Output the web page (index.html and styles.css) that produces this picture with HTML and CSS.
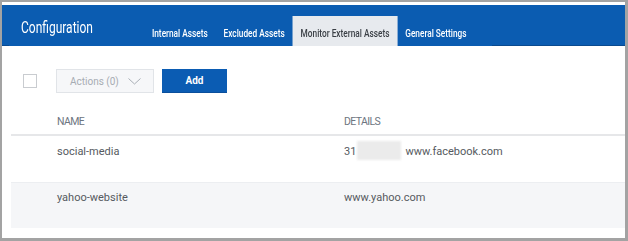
FILE: index.html
```html
<!DOCTYPE html>
<html>
<head>
<meta charset="utf-8">
<link rel="stylesheet" href="styles.css">
</head>
<body>
<div class="frame">
  <div class="topbar">
    <div class="topbar-inner">
      <div class="title"><span class="title-text">Configuration</span></div>
      <nav class="tabs">
        <a class="tab">Internal Assets</a>
        <a class="tab">Excluded Assets</a>
        <a class="tab active">Monitor External Assets</a>
        <a class="tab">General Settings</a>
      </nav>
    </div>
  </div>
  <div class="toolbar">
    <span class="checkbox"></span>
    <button class="btn-actions">Actions (0)
      <svg class="chev" width="13" height="7" viewBox="0 0 13 7"><path d="M0.5 0.5 L6.5 6 L12.5 0.5" fill="none" stroke="#a9afb6" stroke-width="1"/></svg>
    </button>
    <button class="btn-add">Add</button>
  </div>
  <div class="table">
    <div class="row head">
      <div class="th">NAME</div>
      <div class="th">DETAILS</div>
    </div>
    <div class="row">
      <div class="td">social-media</div>
      <div class="td">31<span class="redact"></span>www.facebook.com</div>
    </div>
    <div class="row alt">
      <div class="td">yahoo-website</div>
      <div class="td">www.yahoo.com</div>
    </div>
  </div>
</div>
</body>
</html>
```
FILE: styles.css
```css
* { box-sizing: border-box; }
html, body { margin: 0; padding: 0; background: #fff; }
body { font-family: Roboto, "Liberation Sans", sans-serif; }

.frame {
  width: 628px;
  height: 241px;
  border: 2px solid #a3a3a3;
  border-right-width: 3px;
  border-bottom-width: 3px;
  padding-top: 3px;
  background: #fff;
  overflow: hidden;
}

.topbar {
  height: 41px;
  background: #0b5cb1;
  border-bottom: 1px solid #0a4a8f;
}
.topbar-inner {
  margin-left: 7px;
  width: 483px;
  height: 41px;
  background: #0b5cb1;
  display: flex;
  align-items: flex-end;
}
.title {
  flex: 0 0 135px;
  color: #fff;
  font-size: 16px;
  line-height: 20px;
  padding-left: 12px;
  align-self: flex-start;
  margin-top: 13px;
  white-space: nowrap;
}
.title-text {
  display: inline-block;
  transform: scaleX(0.75);
  transform-origin: left center;
}
/* condensed tab strip */
.tabs {
  display: flex;
  height: 30px;
  flex: 0 0 auto;
  transform: scaleX(0.79);
  transform-origin: left bottom;
}
.tab {
  font-weight: 500;
  font-size: 10.5px;
  color: #fff;
  padding: 11px 10px 0;
  height: 30px;
  line-height: 13px;
  white-space: nowrap;
}
.tab.active { background: #e7eaee; color: #3a3f45; }

.toolbar {
  display: flex;
  align-items: center;
  margin-top: 23px;
  padding-left: 21px;
  height: 24px;
}
.checkbox {
  width: 14px;
  height: 14px;
  border: 1px solid #c9ccd0;
  background: #fff;
  margin-right: 19px;
}
.btn-actions {
  width: 98px;
  height: 24px;
  border: 1px solid #e1e4e8;
  background: #f6f7f9;
  color: #a6acb3;
  font-family: Roboto, sans-serif;
  font-size: 10px;
  display: flex;
  align-items: center;
  padding: 0 0 0 13px;
  margin-right: 8px;
}
.chev { margin-left: 9px; }
.btn-add {
  width: 65px;
  height: 24px;
  border: none;
  background: #0b5cb3;
  border-bottom: 1px solid #0a4f9c;
  color: #fff;
  font-family: Roboto, sans-serif;
  font-weight: 700;
  font-size: 10px;
  padding: 0;
}

.table { margin-left: 9px; }
.row {
  display: grid;
  grid-template-columns: 287px 1fr;
  padding-left: 46px;
  height: 46px;
  padding-top: 9px;
}
.row.head {
  height: 43px;
  padding-top: 22px;
  border-bottom: 2px solid #e6e7e9;
}
.th {
  font-size: 10.5px;
  letter-spacing: -0.6px;
  line-height: 13px;
  color: #6d7580;
}
.td {
  font-size: 11px;
  line-height: 13px;
  color: #555a60;
}
.row.alt { background: #f5f6f8; border-top: 1px solid #eceef1; padding-top: 8px; }
.redact {
  display: inline-block;
  width: 44px;
  height: 19px;
  background: #ebebeb;
  vertical-align: middle;
  margin: -4px 4px 0 1px;
  filter: blur(0.8px);
}
```
